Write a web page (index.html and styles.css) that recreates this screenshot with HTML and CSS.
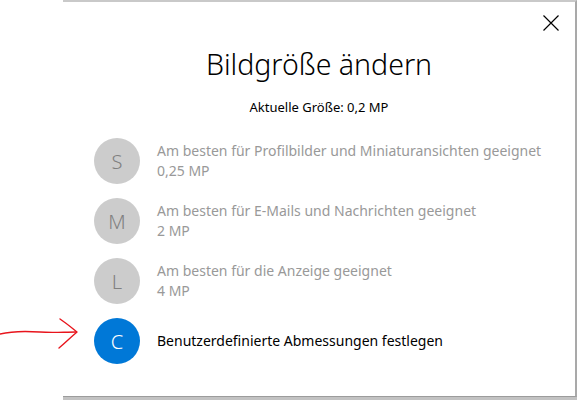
FILE: index.html
```html
<!DOCTYPE html>
<html lang="de">
<head>
    <meta charset="UTF-8">
    <meta name="viewport" content="width=device-width, initial-scale=1.0">
    <title>Bildgröße ändern</title>
    <link rel="stylesheet" href="styles.css">
</head>
<body>
    <div class="dialog">
        <div class="dialog-top">
            <button class="close" aria-label="Schließen">
                <svg width="16" height="16" viewBox="0 0 16 16">
                    <path d="M0.5 0.5 L15.5 15.5 M15.5 0.5 L0.5 15.5" stroke="#000" stroke-width="1.2" fill="none"/>
                </svg>
            </button>
        </div>

        <h1 class="dialog-title">Bildgröße ändern</h1>
        <p class="current-size">Aktuelle Größe: 0,2 MP</p>

        <ul class="options">
            <li class="option disabled">
                <span class="badge">S</span>
                <div class="option-text">
                    <span>Am besten für Profilbilder und Miniaturansichten geeignet</span>
                    <span>0,25 MP</span>
                </div>
            </li>
            <li class="option disabled">
                <span class="badge">M</span>
                <div class="option-text">
                    <span>Am besten für E-Mails und Nachrichten geeignet</span>
                    <span>2 MP</span>
                </div>
            </li>
            <li class="option disabled">
                <span class="badge">L</span>
                <div class="option-text">
                    <span>Am besten für die Anzeige geeignet</span>
                    <span>4 MP</span>
                </div>
            </li>
            <li class="option selected">
                <span class="badge">C</span>
                <div class="option-text">
                    <span>Benutzerdefinierte Abmessungen festlegen</span>
                </div>
            </li>
        </ul>
    </div>

    <!-- hand drawn annotation arrow -->
    <svg class="arrow" width="80" height="40" viewBox="0 0 80 40">
        <path d="M0 16 C12 13, 26 13, 40 14 C52 15, 64 14, 76 14" stroke="#e8141c" stroke-width="1.4" fill="none" stroke-linecap="round"/>
        <path d="M60 1 C66 5, 72 10, 77 14 C71 19, 65 25, 59 30" stroke="#e8141c" stroke-width="1.4" fill="none" stroke-linecap="round" stroke-linejoin="round"/>
    </svg>
</body>
</html>
```

FILE: styles.css
```css
* {
    margin: 0;
    padding: 0;
    box-sizing: border-box;
}

body {
    background: #fff;
    font-family: "Noto Sans", "Open Sans", sans-serif;
    color: #000;
    position: relative;
    width: 577px;
    height: 400px;
    overflow: hidden;
}

.dialog {
    margin-left: 63px;
    width: 514px;
    height: 397px;
    background: #fff;
    border-top: 2px solid #c9c9c9;
    border-right: 2px solid #a9a9a9;
    border-bottom: 1px solid #9c9c9c;
    box-shadow: 0 3px 0 #c2c2c2;
    display: flex;
    flex-direction: column;
}

.dialog-top {
    display: flex;
    justify-content: flex-end;
    padding: 13px 16px 0 0;
    height: 44px;
}

.close {
    background: none;
    border: none;
    width: 16px;
    height: 16px;
    cursor: pointer;
}

.close svg {
    display: block;
}

.dialog-title {
    font-size: 28.5px;
    font-weight: 300;
    line-height: 36px;
    text-align: center;
}

.current-size {
    font-size: 13px;
    line-height: 20px;
    text-align: center;
    margin-top: 15px;
}

.options {
    list-style: none;
    margin-top: 21px;
    padding-left: 31px;
    display: flex;
    flex-direction: column;
    gap: 14px;
}

.option {
    display: flex;
    align-items: center;
    gap: 17px;
}

.badge {
    width: 46px;
    height: 46px;
    border-radius: 50%;
    display: flex;
    align-items: center;
    justify-content: center;
    font-size: 20px;
    font-weight: 300;
    flex-shrink: 0;
}

.option-text {
    display: flex;
    flex-direction: column;
    font-size: 14px;
    line-height: 20px;
}

.disabled .badge {
    background: #cccccc;
    color: #808080;
}

.disabled .option-text {
    color: #999;
}

.selected .badge {
    background: #0078d7;
    color: #fff;
}

.selected .option-text {
    color: #000;
}

.arrow {
    position: absolute;
    left: 0;
    top: 318px;
}
```
